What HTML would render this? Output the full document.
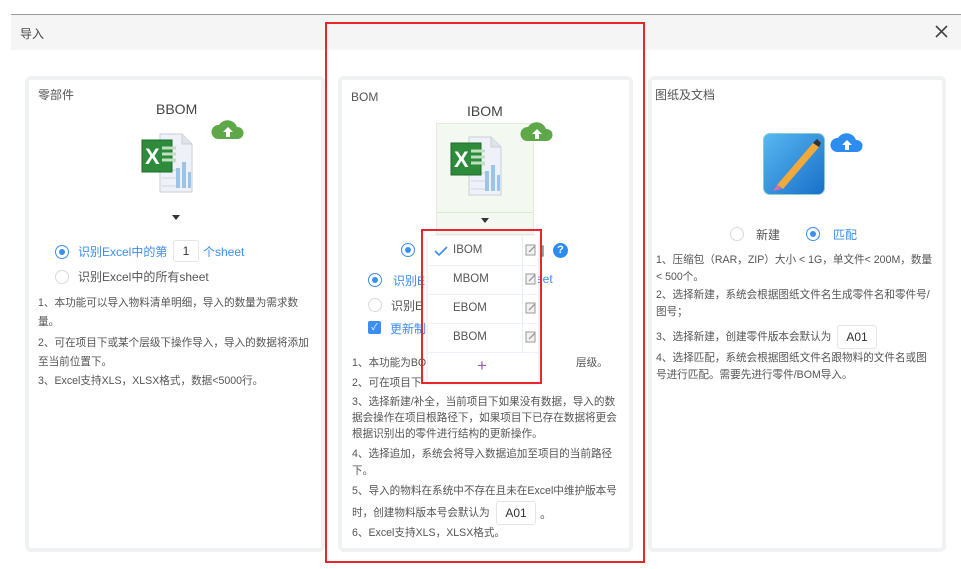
<!DOCTYPE html>
<html><head><meta charset="utf-8"><style>
*{margin:0;padding:0;box-sizing:border-box}
body{width:961px;height:569px;background:#fff;font-family:"Liberation Sans","Noto Sans CJK SC",sans-serif;color:#555;font-size:12px;position:relative;overflow:hidden}
.a{position:absolute;white-space:nowrap}
.l{position:absolute;white-space:nowrap;font-size:10.6px;line-height:16px;color:#555}
.card{position:absolute;border:4px solid #f0f1f2;border-radius:6px;background:#fff}
.radio{position:absolute;width:14px;height:14px;border-radius:50%;border:1px solid #d9d9d9;background:#fff}
.radio.on{border-color:#3c8ef0}
.radio.on::after{content:"";position:absolute;left:3px;top:3px;width:6px;height:6px;border-radius:50%;background:#3c8ef0}
.blue{color:#3c8ef0}
.box{position:absolute;border:1px solid #e5e5e5;border-radius:3px;background:#fff;text-align:center;color:#333;font-size:12px}
.tri{position:absolute;width:0;height:0;border-left:4px solid transparent;border-right:4px solid transparent;border-top:5px solid #333}
</style></head><body>
<div class="a" style="left:11px;top:14px;width:950px;height:1px;background:#999"></div>
<div class="a" style="left:11px;top:15px;width:950px;height:35px;background:#f5f5f5"></div>
<div class="a" style="left:20px;top:25px;font-size:12px;color:#444">导入</div>
<svg class="a" style="left:935px;top:25px" width="13" height="13"><path d="M1 1L12 12M12 1L1 12" stroke="#444" stroke-width="1.6"/></svg>

<svg width="0" height="0" style="position:absolute"><defs>
<g id="xl">
<path d="M20 2h22l10 10v48H20z" fill="#eef1f7" stroke="#c9ced8"/>
<path d="M42 2v10h10" fill="#dfe3ea" stroke="#c9ced8"/>
<g fill="#9dc3e6"><rect x="36" y="36" width="4" height="20"/><rect x="42" y="30" width="4" height="26"/><rect x="48" y="40" width="3" height="16"/></g>
<g stroke="#d0d6df"><path d="M22 30h14M22 38h14M22 46h14M22 54h14"/></g>
<rect x="2" y="8" width="30" height="32" fill="#2e8b3c" stroke="#1d6b2a"/>
<path d="M22 16h14M22 22h14M22 28h14" stroke="#bfe0bf" stroke-width="3"/>
<text x="5" y="32" font-family="Liberation Sans" font-weight="bold" font-size="22" fill="#fff">X</text>
</g>
<g id="cl"><path d="M8 22a7 7 0 0 1 1-14a10 10 0 0 1 18 2a6 6 0 0 1 1 12z"/><path d="M18 10l-5 5h3v5h4v-5h3z" fill="#fff"/></g>
</defs></svg>

<!-- left card -->
<div class="card" style="left:25px;top:76px;width:300px;height:476px"></div>
<div class="a" style="left:38px;top:86px;font-size:12px;color:#555">零部件</div>
<div class="a" style="left:156px;top:101px;font-size:14px;color:#444">BBOM</div>
<svg class="a" style="left:140px;top:132px" width="56" height="64"><use href="#xl"/></svg>
<svg class="a" style="left:210px;top:117px" width="36" height="24" fill="#5fa84a"><use href="#cl"/></svg>
<div class="tri" style="left:172px;top:215px"></div>
<div class="radio on" style="left:55px;top:245px"></div>
<div class="a blue" style="left:78px;top:243px;font-size:12px">识别Excel中的第</div>
<div class="box" style="left:173px;top:240px;width:26px;height:22px;line-height:20px">1</div>
<div class="a blue" style="left:203px;top:243px;font-size:12px">个sheet</div>
<div class="radio" style="left:55px;top:270px"></div>
<div class="a" style="left:78px;top:268px;font-size:12px;color:#555">识别Excel中的所有sheet</div>
<div class="l" style="left:38px;top:295px">1、本功能可以导入物料清单明细，导入的数量为需求数</div>
<div class="l" style="left:38px;top:314px">量。</div>
<div class="l" style="left:38px;top:335px">2、可在项目下或某个层级下操作导入，导入的数据将添加</div>
<div class="l" style="left:38px;top:354px">至当前位置下。</div>
<div class="l" style="left:38px;top:373px">3、Excel支持XLS，XLSX格式，数据&lt;5000行。</div>

<!-- middle card -->
<div class="card" style="left:338px;top:76px;width:295px;height:476px"></div>
<div class="a" style="left:351px;top:90px;font-size:12px;color:#555">BOM</div>
<div class="a" style="left:467px;top:103px;font-size:14px;color:#444">IBOM</div>
<div class="a" style="left:436px;top:123px;width:98px;height:112px;background:#f3f8f1;border:1px solid #e1ebde"></div>
<div class="a" style="left:437px;top:212px;width:96px;height:1px;background:#d9e8d3"></div>
<svg class="a" style="left:449px;top:135px" width="56" height="64"><use href="#xl"/></svg>
<svg class="a" style="left:519px;top:119px" width="36" height="24" fill="#5fa84a"><use href="#cl"/></svg>
<div class="tri" style="left:481px;top:218px"></div>
<div class="radio on" style="left:401px;top:243px"></div>
<div class="a" style="left:541px;top:243px;font-size:12px;color:#444">]</div>
<div class="a" style="left:553px;top:243px;width:15px;height:15px;border-radius:50%;background:#2d8cf0;color:#fff;font-size:11px;font-weight:bold;text-align:center;line-height:15px">?</div>
<div class="radio on" style="left:368px;top:273px"></div>
<div class="a blue" style="left:393px;top:272px;font-size:12px">识别E</div>
<div class="a blue" style="left:536px;top:272px;font-size:12px">eet</div>
<div class="radio" style="left:368px;top:298px"></div>
<div class="a" style="left:391px;top:297px;font-size:12px">识别E</div>
<div class="a" style="left:368px;top:321px;width:13px;height:13px;background:#3c8ef0;border-radius:2px;color:#fff;font-size:9px;text-align:center;line-height:13px">✓</div>
<div class="a blue" style="left:390px;top:320px;font-size:12px">更新制</div>
<div class="l" style="left:352px;top:355px">1、本功能为BO</div>
<div class="l" style="left:576px;top:355px">层级。</div>
<div class="l" style="left:352px;top:375px">2、可在项目下</div>
<div class="l" style="left:352px;top:394px">3、选择新建/补全，当前项目下如果没有数据，导入的数</div>
<div class="l" style="left:352px;top:410px">据会操作在项目根路径下，如果项目下已存在数据将更会</div>
<div class="l" style="left:352px;top:426px">根据识别出的零件进行结构的更新操作。</div>
<div class="l" style="left:352px;top:446px">4、选择追加，系统会将导入数据追加至项目的当前路径</div>
<div class="l" style="left:352px;top:463px">下。</div>
<div class="l" style="left:352px;top:483px">5、导入的物料在系统中不存在且未在Excel中维护版本号</div>
<div class="l" style="left:352px;top:505px">时，创建物料版本号会默认为</div>
<div class="box" style="left:496px;top:501px;width:40px;height:24px;line-height:22px">A01</div>
<div class="a" style="left:540px;top:505px;font-size:12px">。</div>
<div class="l" style="left:352px;top:525px">6、Excel支持XLS，XLSX格式。</div>

<!-- dropdown -->
<div class="a" style="left:428px;top:236px;width:110px;height:146px;background:#fff;box-shadow:0 1px 4px rgba(0,0,0,.15)"></div>
<div class="a" style="left:522px;top:236px;width:1px;height:116px;background:#e6eef8"></div>
<div class="a" style="left:428px;top:265px;width:110px;height:1px;background:#edf2f8"></div>
<div class="a" style="left:428px;top:294px;width:110px;height:1px;background:#edf2f8"></div>
<div class="a" style="left:428px;top:323px;width:110px;height:1px;background:#edf2f8"></div>
<div class="a" style="left:428px;top:352px;width:110px;height:1px;background:#edf2f8"></div>
<svg class="a" style="left:434px;top:246px" width="14" height="10"><path d="M1 5l4 4 8-8" fill="none" stroke="#3c8ef0" stroke-width="1.6"/></svg>
<div class="a" style="left:453px;top:244px;font-size:11.5px;color:#555">IBOM</div>
<div class="a" style="left:453px;top:273px;font-size:11.5px;color:#555">MBOM</div>
<div class="a" style="left:453px;top:302px;font-size:11.5px;color:#555">EBOM</div>
<div class="a" style="left:453px;top:331px;font-size:11.5px;color:#555">BBOM</div>
<svg class="a" style="left:525px;top:244px" width="12" height="104" fill="#f2f2f2" stroke="#999">
<g id="ed"><rect x="1" y="1" width="9" height="10"/><path d="M4 8l6-6" stroke-width="1.3"/></g>
<use href="#ed" y="29"/><use href="#ed" y="58"/><use href="#ed" y="87"/></svg>
<div class="a" style="left:477px;top:356px;font-size:17px;color:#9b59b6">+</div>

<!-- right card -->
<div class="card" style="left:648px;top:76px;width:298px;height:476px"></div>
<div class="a" style="left:655px;top:86px;font-size:12px;color:#555">图纸及文档</div>
<div class="a" style="left:763px;top:133px;width:62px;height:62px;border-radius:7px;background:linear-gradient(135deg,#57b8f0,#1a6fc9);border:1px solid #8cc"></div>
<svg class="a" style="left:763px;top:133px" width="62" height="62"><path d="M14 52L50 10l6 4-36 42z" fill="#f2a93b"/><path d="M14 52l-4 6 8-2z" fill="#e06ba8"/><path d="M50 10l4-4 4 4-2 4z" fill="#333"/></svg>
<svg class="a" style="left:829px;top:130px" width="36" height="24" fill="#2d8cf0"><use href="#cl"/></svg>
<div class="radio" style="left:730px;top:227px"></div>
<div class="a" style="left:756px;top:226px;font-size:12px">新建</div>
<div class="radio on" style="left:806px;top:227px"></div>
<div class="a blue" style="left:833px;top:226px;font-size:12px">匹配</div>
<div class="l" style="left:656px;top:252px">1、压缩包（RAR，ZIP）大小 &lt; 1G，单文件&lt; 200M，数量</div>
<div class="l" style="left:656px;top:269px">&lt; 500个。</div>
<div class="l" style="left:656px;top:287px">2、选择新建，系统会根据图纸文件名生成零件名和零件号/</div>
<div class="l" style="left:656px;top:304px">图号；</div>
<div class="l" style="left:656px;top:329px">3、选择新建，创建零件版本会默认为</div>
<div class="box" style="left:837px;top:325px;width:40px;height:24px;line-height:22px">A01</div>
<div class="l" style="left:656px;top:350px">4、选择匹配，系统会根据图纸文件名跟物料的文件名或图</div>
<div class="l" style="left:656px;top:367px">号进行匹配。需要先进行零件/BOM导入。</div>

<!-- red boxes -->
<div class="a" style="left:325px;top:22px;width:320px;height:541px;border:2px solid #e8262b"></div>
<div class="a" style="left:421px;top:229px;width:121px;height:155px;border:2px solid #e8262b"></div>
</body></html>
